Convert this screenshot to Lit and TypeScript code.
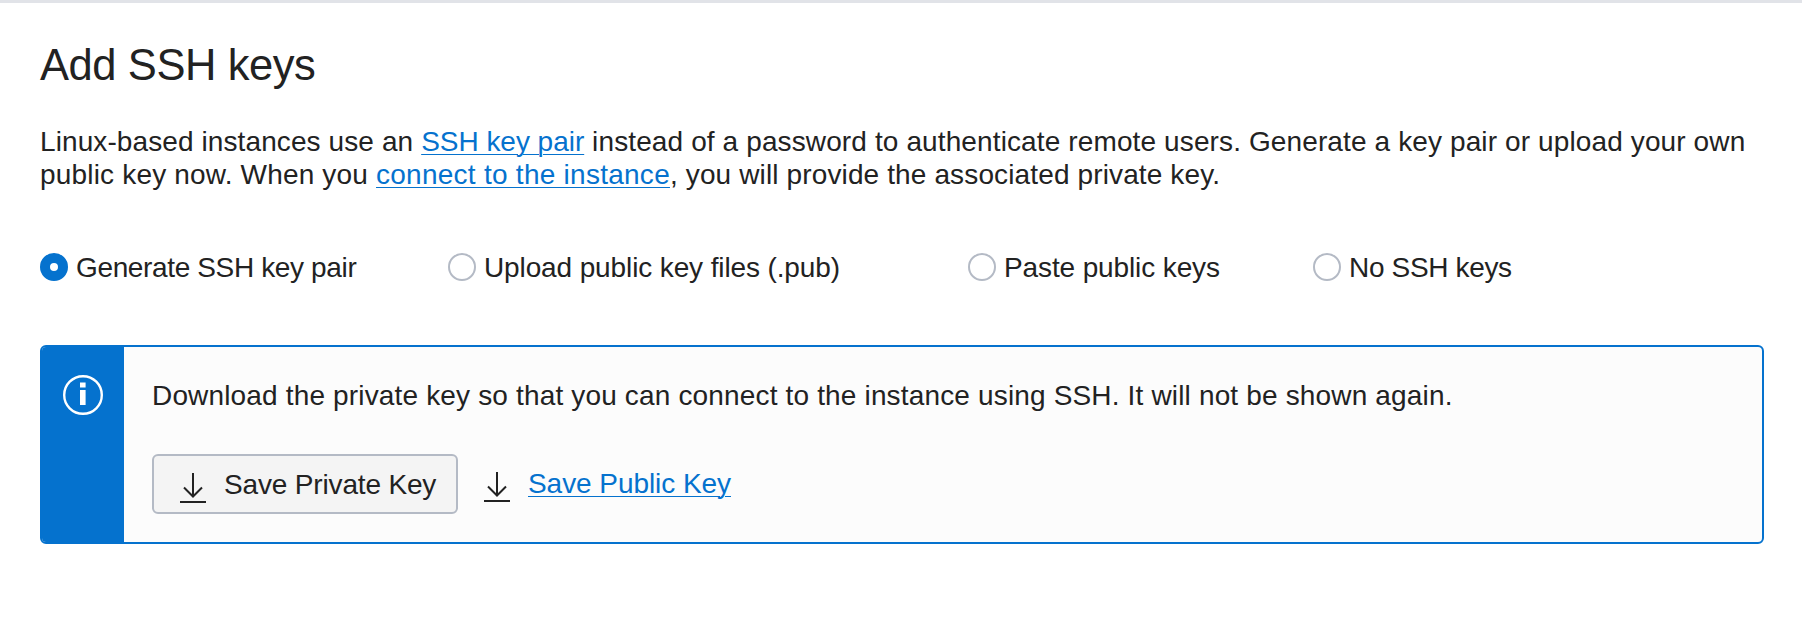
import { LitElement, html, css, svg } from "lit";
import { customElement, state } from "lit/decorators.js";

const OPTIONS = [
  { id: "generate", label: "Generate SSH key pair" },
  { id: "upload", label: "Upload public key files (.pub)" },
  { id: "paste", label: "Paste public keys" },
  { id: "none", label: "No SSH keys" },
];

const downloadIcon = html`<svg class="download" viewBox="0 0 26 30" aria-hidden="true">
  ${svg`<path d="M13 0V23.5M4 14.5L13 23.5L22 14.5M0 29H26" fill="none" stroke="#222" stroke-width="2"/>`}
</svg>`;

@customElement("app-root")
export class AppRoot extends LitElement {
  static styles = css`
    :host {
      display: block;
      box-sizing: border-box;
      height: 626px;
      padding: 37px 38px 0 40px;
      border-top: 3px solid #e1e3e8;
      background: #fff;
      color: #222;
      font: 28px/33px "Liberation Sans", Arial, sans-serif;
      white-space: nowrap;
      overflow: hidden;
    }
    h1 {
      margin: 0 0 35px;
      font-size: 43.5px;
      line-height: 50px;
      font-weight: 400;
      letter-spacing: -0.42px;
    }
    p { margin: 0; }
    a {
      color: #0572ce;
      text-decoration: underline;
      text-decoration-thickness: 1.3px;
      text-underline-offset: 3px;
    }
    .lead { letter-spacing: 0.1px; }
    .lead-link { letter-spacing: -0.03px; }
    .lead-rest { letter-spacing: 0.12px; }
    .second { letter-spacing: 0.18px; }
    .second-link { letter-spacing: 0.26px; }
    .second-rest { letter-spacing: 0.13px; }
    .options {
      display: grid;
      grid-template-columns: 408px 520px 345px auto;
      margin-top: 60px;
    }
    .option {
      display: flex;
      align-items: flex-start;
      gap: 8px;
      cursor: pointer;
    }
    .radio {
      box-sizing: border-box;
      width: 28px;
      height: 28px;
      margin-top: 2px;
      border: 2px solid #b4bac5;
      border-radius: 50%;
      background: #fff;
      flex: none;
    }
    .radio.on { border: 10px solid #0572ce; }
    .generate { letter-spacing: -0.36px; }
    .upload { letter-spacing: -0.12px; }
    .paste { letter-spacing: -0.12px; }
    .none { letter-spacing: -0.34px; }
    .notice {
      display: flex;
      box-sizing: border-box;
      height: 199px;
      margin-top: 61px;
      border: 2px solid #0572ce;
      border-radius: 6px;
      background: #fcfcfc;
      overflow: hidden;
    }
    .band {
      width: 82px;
      padding: 28px 0 0 21px;
      box-sizing: border-box;
      background: #0572ce;
      flex: none;
    }
    .info { display: block; width: 40px; height: 40px; }
    .body { padding: 32px 0 0 28px; }
    .message { letter-spacing: 0.16px; }
    .actions {
      display: flex;
      align-items: flex-start;
      margin-top: 42px;
    }
    .button {
      display: flex;
      align-items: flex-start;
      box-sizing: border-box;
      width: 306px;
      height: 60px;
      margin: 0;
      padding: 12px 0 0 26px;
      border: 2px solid #b4bac5;
      border-radius: 6px;
      background: #f4f4f4;
      color: inherit;
      font: inherit;
      letter-spacing: -0.16px;
      cursor: pointer;
    }
    .download { width: 26px; height: 30px; flex: none; margin: 5px 18px 0 0; }
    .public {
      display: flex;
      align-items: flex-start;
      padding: 13px 0 0 26px;
      letter-spacing: -0.06px;
    }
  `;

  @state() private selected = "generate";

  render() {
    return html`
      <h1>Add SSH keys</h1>
      <p>
        <span class="lead">Linux-based instances use an </span><a class="lead-link">SSH key pair</a><span class="lead-rest"> instead of a password to authenticate remote users. Generate a key pair or upload your own</span><br />
        <span class="second">public key now. When you </span><a class="second-link">connect to the instance</a><span class="second-rest">, you will provide the associated private key.</span>
      </p>
      <div class="options" role="radiogroup">
        ${OPTIONS.map(
          (o) => html`<div
            class="option"
            role="radio"
            aria-checked=${this.selected === o.id}
            @click=${() => (this.selected = o.id)}
          >
            <span class="radio ${this.selected === o.id ? "on" : ""}"></span>
            <span class=${o.id}>${o.label}</span>
          </div>`
        )}
      </div>
      <section class="notice">
        <div class="band">
          <svg class="info" viewBox="0 0 40 40" aria-hidden="true">
            <circle cx="20" cy="20" r="18.8" fill="none" stroke="#fff" stroke-width="2.4" />
            <path d="M17 7.5H22.6V12.5H17ZM17 15H22.6V30H17Z" fill="#fff" />
          </svg>
        </div>
        <div class="body">
          <p class="message">Download the private key so that you can connect to the instance using SSH. It will not be shown again.</p>
          <div class="actions">
            <button class="button">${downloadIcon}<span>Save Private Key</span></button>
            <div class="public">${downloadIcon}<a>Save Public Key</a></div>
          </div>
        </div>
      </section>
    `;
  }
}
